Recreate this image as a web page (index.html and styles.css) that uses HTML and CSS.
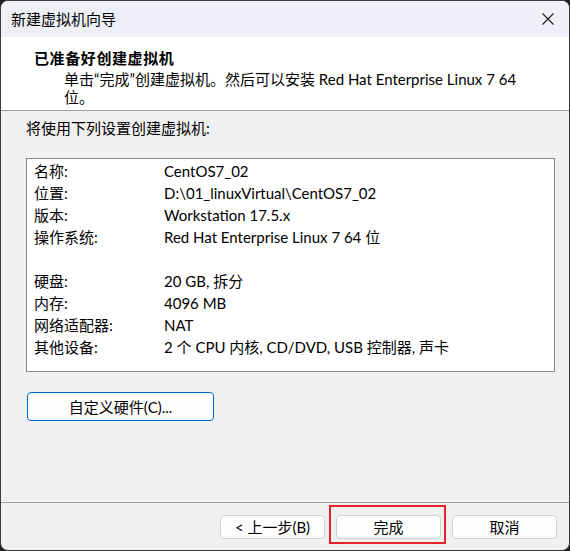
FILE: index.html
```html
<!DOCTYPE html>
<html lang="zh-CN">
<head>
    <meta charset="UTF-8">
    <meta name="viewport" content="width=device-width, initial-scale=1.0">
    <title>新建虚拟机向导</title>
    <link rel="stylesheet" href="styles.css">
</head>
<body>
    <div class="window">
        <div class="titlebar">
            <span class="title">新建虚拟机向导</span>
            <span class="close">
                <svg width="12" height="12" viewBox="0 0 12 12">
                    <path d="M0.5 0.5 L11.5 11.5 M11.5 0.5 L0.5 11.5" stroke="#1a1a1a" stroke-width="1.1" fill="none"/>
                </svg>
            </span>
        </div>

        <!-- 向导页头 -->
        <div class="header">
            <h1>已准备好创建虚拟机</h1>
            <p>单击“完成”创建虚拟机。然后可以安装 Red Hat Enterprise Linux 7 64<br>位。</p>
        </div>

        <div class="content">
            <p class="intro">将使用下列设置创建虚拟机:</p>
            <div class="summary">
                <span class="label">名称:</span><span>CentOS7_02</span>
                <span class="label">位置:</span><span>D:\01_linuxVirtual\CentOS7_02</span>
                <span class="label">版本:</span><span>Workstation 17.5.x</span>
                <span class="label">操作系统:</span><span>Red Hat Enterprise Linux 7 64 位</span>
                <span class="blank"></span><span class="blank"></span>
                <span class="label">硬盘:</span><span>20 GB, 拆分</span>
                <span class="label">内存:</span><span>4096 MB</span>
                <span class="label">网络适配器:</span><span>NAT</span>
                <span class="label">其他设备:</span><span>2 个 CPU 内核, CD/DVD, USB 控制器, 声卡</span>
            </div>
            <button class="btn custom-btn">自定义硬件(C)...</button>
        </div>

        <div class="footer">
            <button class="btn">&lt; 上一步(B)</button>
            <button class="btn finish">完成</button>
            <button class="btn">取消</button>
        </div>
    </div>
</body>
</html>
```

FILE: styles.css
```css
* {
    box-sizing: border-box;
}

body {
    margin: 0;
    background-color: #1f1f1f;
    font-family: 'Segoe UI', 'Lato', 'Noto Sans CJK SC', sans-serif;
    font-size: 15px;
    color: #000;
}

.window {
    width: 570px;
    height: 551px;
    border: 1px solid #3c3c3c;
    border-radius: 8px;
    overflow: hidden;
    background-color: #f0f0f0;
    display: flex;
    flex-direction: column;
}

.titlebar {
    height: 36px;
    background-color: #eff0f7;
    display: flex;
    align-items: center;
    justify-content: space-between;
    padding: 0 15px 0 10px;
}

.title {
    font-size: 15px;
    line-height: 20px;
}

.close {
    display: flex;
    width: 12px;
    height: 12px;
}

.header {
    background-color: #fff;
    border-bottom: 1px solid #a0a0a0;
    height: 74px;
    padding: 10px 0 0 33px;
}

.header h1 {
    margin: 0;
    font-size: 15px;
    font-weight: bold;
    line-height: 22px;
    letter-spacing: 0.6px;
}

.header p {
    margin: 1px 0 0 30px;
    line-height: 18px;
}

.content {
    flex: 1;
    padding: 7px 0 0 25px;
}

.intro {
    margin: 0 0 20px;
    line-height: 20px;
}

.summary {
    width: 529px;
    height: 214px;
    border: 1px solid #828790;
    background-color: #fff;
    padding: 1px 0 0 7px;
    display: grid;
    grid-template-columns: 130px 1fr;
    grid-auto-rows: 22px;
    line-height: 22px;
    margin-bottom: 20px;
}

.btn {
    font-family: inherit;
    font-size: 15px;
    color: #000;
    background-color: #fdfdfd;
    border: 1px solid #d0d0d0;
    border-radius: 4px;
    padding: 0;
    height: 24px;
    width: 105px;
    line-height: 20px;
}

.custom-btn {
    width: 187px;
    height: 29px;
    border-color: #0067c0;
    margin-left: 1px;
}

.footer {
    height: 48px;
    border-top: 1px solid #a0a0a0;
    display: flex;
    justify-content: flex-end;
    gap: 11px;
    padding: 12px 12px 0 0;
}

.finish {
    position: relative;
}

/* 截图里的红色标注框 */
.finish::after {
    content: '';
    position: absolute;
    top: -11px;
    bottom: -6px;
    left: -8px;
    right: -6px;
    border: 2px solid #e8212e;
}
```
